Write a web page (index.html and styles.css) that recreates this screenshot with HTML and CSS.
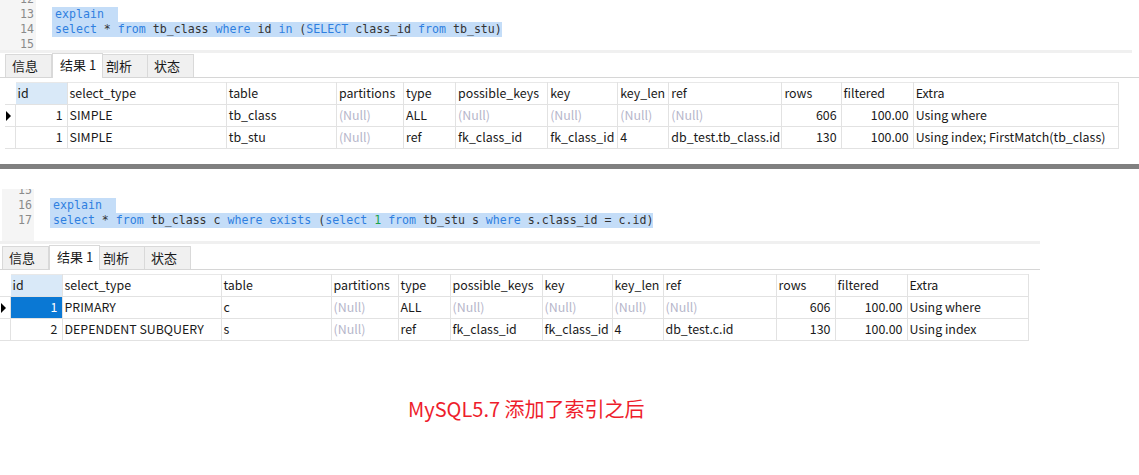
FILE: index.html
```html
<!DOCTYPE html>
<html lang="zh-CN">
<head>
<meta charset="utf-8">
<title>explain</title>
<link rel="stylesheet" href="styles.css">
</head>
<body>
<section class="shot shot-top">
  <div class="editor">
    <div class="gutter">
      <div class="ln">12</div>
      <div class="ln">13</div>
      <div class="ln">14</div>
      <div class="ln">15</div>
    </div>
    <div class="code">
      <div class="line">&nbsp;</div>
      <div class="line"><span class="sel"><span class="kw">explain</span>  </span></div>
      <div class="line"><span class="sel"><span class="kw">select</span> * <span class="kw">from</span> tb_class <span class="kw">where</span> id <span class="kw">in</span> (<span class="kw">SELECT</span> class_id <span class="kw">from</span> tb_stu)</span></div>
      <div class="line">&nbsp;</div>
    </div>
  </div>
  <div class="strip"></div>
  <div class="tabs">
    <div class="tab t1">信息</div>
    <div class="tab t2 active">结果 1</div>
    <div class="tab t3">剖析</div>
    <div class="tab t4">状态</div>
  </div>
  <table class="grid">
    <thead>
      <tr><th class="ind"></th><th class="c-id hl">id</th><th class="c-st">select_type</th><th class="c-tb">table</th><th class="c-pa">partitions</th><th class="c-ty">type</th><th class="c-pk">possible_keys</th><th class="c-k">key</th><th class="c-kl">key_len</th><th class="c-ref">ref</th><th class="c-rows">rows</th><th class="c-f">filtered</th><th class="c-ex">Extra</th></tr>
    </thead>
    <tbody>
      <tr><td class="ind"><span class="arrow"></span></td><td class="num">1</td><td>SIMPLE</td><td>tb_class</td><td class="null">(Null)</td><td>ALL</td><td class="null">(Null)</td><td class="null">(Null)</td><td class="null">(Null)</td><td class="null">(Null)</td><td class="num">606</td><td class="num">100.00</td><td>Using where</td></tr>
      <tr><td class="ind"></td><td class="num">1</td><td>SIMPLE</td><td>tb_stu</td><td class="null">(Null)</td><td>ref</td><td>fk_class_id</td><td>fk_class_id</td><td>4</td><td>db_test.tb_class.id</td><td class="num">130</td><td class="num">100.00</td><td>Using index; FirstMatch(tb_class)</td></tr>
    </tbody>
  </table>
</section>

<div class="divider"></div>

<section class="shot shot-bottom">
  <div class="editor">
    <div class="gutter">
      <div class="ln">15</div>
      <div class="ln">16</div>
      <div class="ln">17</div>
    </div>
    <div class="code">
      <div class="line">&nbsp;</div>
      <div class="line"><span class="sel"><span class="kw">explain</span>  </span></div>
      <div class="line"><span class="sel"><span class="kw">select</span> * <span class="kw">from</span> tb_class c <span class="kw">where</span> <span class="kw">exists</span> (<span class="kw">select</span> <span class="lit">1</span> <span class="kw">from</span> tb_stu s <span class="kw">where</span> s.class_id = c.id)</span></div>
    </div>
  </div>
  <div class="strip"></div>
  <div class="tabs">
    <div class="tab t1">信息</div>
    <div class="tab t2 active">结果 1</div>
    <div class="tab t3">剖析</div>
    <div class="tab t4">状态</div>
  </div>
  <table class="grid">
    <thead>
      <tr><th class="ind"></th><th class="c-id hl">id</th><th class="c-st">select_type</th><th class="c-tb">table</th><th class="c-pa">partitions</th><th class="c-ty">type</th><th class="c-pk">possible_keys</th><th class="c-k">key</th><th class="c-kl">key_len</th><th class="c-ref">ref</th><th class="c-rows">rows</th><th class="c-f">filtered</th><th class="c-ex">Extra</th></tr>
    </thead>
    <tbody>
      <tr><td class="ind"><span class="arrow"></span></td><td class="num cur">1</td><td>PRIMARY</td><td>c</td><td class="null">(Null)</td><td>ALL</td><td class="null">(Null)</td><td class="null">(Null)</td><td class="null">(Null)</td><td class="null">(Null)</td><td class="num">606</td><td class="num">100.00</td><td>Using where</td></tr>
      <tr><td class="ind"></td><td class="num">2</td><td>DEPENDENT SUBQUERY</td><td>s</td><td class="null">(Null)</td><td>ref</td><td>fk_class_id</td><td>fk_class_id</td><td>4</td><td>db_test.c.id</td><td class="num">130</td><td class="num">100.00</td><td>Using index</td></tr>
    </tbody>
  </table>
</section>

<p class="caption">MySQL5.7 添加了索引之后</p>
</body>
</html>
```

FILE: styles.css
```css
html, body {
  margin: 0;
  padding: 0;
  background: #ffffff;
}
body {
  width: 1139px;
  height: 475px;
  overflow: hidden;
  font-family: "Noto Sans CJK SC", "Noto Sans", sans-serif;
  font-size: 13px;
  color: #1a1a1a;
}

/* ---------- editor ---------- */
.editor {
  display: flex;
  overflow: hidden;
}
.shot-top .editor { height: 50px; }
.shot-bottom .editor { height: 52px; margin-top: 20px; }

.gutter {
  background: #f5f5f5;
  color: #8a8a8a;
  text-align: right;
  font-family: "DejaVu Sans Mono", monospace;
  font-size: 11.6px;
}
.shot-top .gutter { width: 34px; padding-right: 2px; margin-top: -8px; height: 66px; }
.shot-bottom .gutter { width: 30px; margin-left: 2px; padding-right: 2px; margin-top: -6px; height: 66px; }

.ln, .line {
  height: 15px;
  line-height: 15px;
  white-space: pre;
}

.code {
  flex: 1;
  font-family: "DejaVu Sans Mono", monospace;
  font-size: 11.6px;
  color: #333333;
}
.shot-top .code { padding-left: 16px; margin-top: -8px; }
.shot-bottom .code { padding-left: 16px; margin-top: -6px; }

.sel {
  background: #c4ddf8;
  padding-left: 3px;
  display: inline-block;
  height: 15px;
}
.kw { color: #2f7fe0; }
.lit { color: #1aa34a; }

/* ---------- strip & tabs ---------- */
.strip {
  height: 3px;
  background: #f0f0f0;
}
.shot-top .strip { width: 1132px; }
.shot-bottom .strip { width: 1040px; }

.tabs {
  display: flex;
  align-items: flex-end;
  height: 24px;
  border-bottom: 1px solid #d6d6d6;
}
.shot-top .tabs { padding-left: 5px; }
.shot-bottom .tabs { padding-left: 2px; margin-top: 1px; width: 1038px; }

.tab {
  box-sizing: border-box;
  height: 23px;
  line-height: 22px;
  background: #f0f0f0;
  border: 1px solid #d9d9d9;
  border-bottom: none;
  border-left: none;
  color: #1a1a1a;
  font-size: 13px;
}
.tab.t1 { width: 47px; padding-left: 6px; border-left: 1px solid #d9d9d9; }
.tab.t2 { width: 51px; padding-left: 7px; }
.tab.t3 { width: 45px; padding-left: 3px; }
.tab.t4 { width: 46px; padding-left: 6px; }
.tab.active {
  background: #ffffff;
  height: 25px;
  margin-bottom: -1px;
  line-height: 21px;
  border-left: 1px solid #d9d9d9;
}

/* ---------- grid ---------- */
.grid {
  border-collapse: collapse;
  table-layout: fixed;
  font-size: 12.4px;
}
.shot-top .grid { margin-top: 4px; margin-left: 5px; width: 1114px; }
.shot-bottom .grid { margin-top: 4px; margin-left: 0; width: 1028px; }

.grid th, .grid td {
  box-sizing: border-box;
  height: 22px;
  padding: 0 2px;
  white-space: nowrap;
  overflow: hidden;
  text-align: left;
  font-weight: normal;
  border-right: 1px solid #e2e2e2;
  border-bottom: 1px solid #e2e2e2;
  line-height: 21px;
}
.grid th { border-top: 1px solid #e8e8e8; }
.grid th.ind { border-top: none; border-right: 1px solid #ffffff; }
.grid td.ind { border-right: 1px solid #e2e2e2; }

.ind { width: 10px; padding: 0 !important; position: relative; }
.c-id { width: 52px; }
.c-st { width: 159px; }
.c-tb { width: 110px; }
.c-pa { width: 67px; }
.c-ty { width: 52px; }
.c-pk { width: 92px; }
.c-k { width: 70px; }
.c-kl { width: 51px; }
.c-ref { width: 113px; }
.c-rows { width: 59px; }
.c-f { width: 72px; }
.shot-top .c-ex { width: 205px; }
.shot-bottom .c-ex { width: 121px; }

.grid th.hl { background: #d9e9f8; }
.grid td.num { text-align: right; padding-right: 4px; }
.grid td.cur { background: #0a78d4; color: #ffffff; }
.grid td.null { color: #b6b6ca; }

.arrow {
  position: absolute;
  left: 1px;
  top: 6px;
  width: 0;
  height: 0;
  border-top: 5px solid transparent;
  border-bottom: 5px solid transparent;
  border-left: 5px solid #000000;
}

/* ---------- divider ---------- */
.divider {
  height: 5px;
  background: #808080;
  margin-top: 15px;
}

/* ---------- caption ---------- */
.caption {
  margin: 55px 0 0 408px;
  font-size: 20px;
  line-height: 26px;
  color: #ee1d2c;
}
```
